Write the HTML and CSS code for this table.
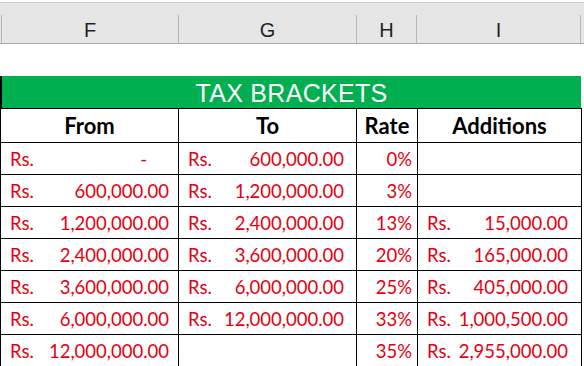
FILE: index.html
```html
<!DOCTYPE html>
<html>
<head>
<meta charset="utf-8">
<link rel="stylesheet" href="styles.css">
</head>
<body>
<div class="sheet">
  <div class="colhead">
    <div class="ch ch-f">F</div>
    <div class="ch ch-g">G</div>
    <div class="ch ch-h">H</div>
    <div class="ch ch-i">I</div>
    <div class="ch ch-rest"></div>
  </div>
  <div class="gap"></div>
  <div class="title">TAX BRACKETS</div>
  <table class="grid">
    <colgroup>
      <col class="w-from"><col class="w-to"><col class="w-rate"><col class="w-add">
    </colgroup>
    <tr class="hdr"><th>From</th><th>To</th><th>Rate</th><th>Additions</th></tr>
    <tr>
      <td class="f"><div class="money"><span>Rs.</span><span class="dash">-</span></div></td>
      <td class="g"><div class="money"><span>Rs.</span><span>600,000.00</span></div></td>
      <td class="h">0%</td>
      <td class="i"></td>
    </tr>
    <tr>
      <td class="f"><div class="money"><span>Rs.</span><span>600,000.00</span></div></td>
      <td class="g"><div class="money"><span>Rs.</span><span>1,200,000.00</span></div></td>
      <td class="h">3%</td>
      <td class="i"></td>
    </tr>
    <tr>
      <td class="f"><div class="money"><span>Rs.</span><span>1,200,000.00</span></div></td>
      <td class="g"><div class="money"><span>Rs.</span><span>2,400,000.00</span></div></td>
      <td class="h">13%</td>
      <td class="i"><div class="money"><span>Rs.</span><span>15,000.00</span></div></td>
    </tr>
    <tr>
      <td class="f"><div class="money"><span>Rs.</span><span>2,400,000.00</span></div></td>
      <td class="g"><div class="money"><span>Rs.</span><span>3,600,000.00</span></div></td>
      <td class="h">20%</td>
      <td class="i"><div class="money"><span>Rs.</span><span>165,000.00</span></div></td>
    </tr>
    <tr>
      <td class="f"><div class="money"><span>Rs.</span><span>3,600,000.00</span></div></td>
      <td class="g"><div class="money"><span>Rs.</span><span>6,000,000.00</span></div></td>
      <td class="h">25%</td>
      <td class="i"><div class="money"><span>Rs.</span><span>405,000.00</span></div></td>
    </tr>
    <tr>
      <td class="f"><div class="money"><span>Rs.</span><span>6,000,000.00</span></div></td>
      <td class="g"><div class="money"><span>Rs.</span><span>12,000,000.00</span></div></td>
      <td class="h">33%</td>
      <td class="i"><div class="money"><span>Rs.</span><span>1,000,500.00</span></div></td>
    </tr>
    <tr>
      <td class="f"><div class="money"><span>Rs.</span><span>12,000,000.00</span></div></td>
      <td class="g"></td>
      <td class="h">35%</td>
      <td class="i"><div class="money"><span>Rs.</span><span>2,955,000.00</span></div></td>
    </tr>
  </table>
</div>
</body>
</html>
```
FILE: styles.css
```css
html, body {
  margin: 0;
  padding: 0;
  background: #ffffff;
}
.sheet {
  width: 584px;
  height: 366px;
  overflow: hidden;
}
.colhead {
  margin-top: 2px;
  border-top: 1px solid #c8c8c8;
  border-bottom: 1px solid #a6a6a6;
  background: #e6e6e6;
  padding: 12px 0 0 1px;
  height: 28px;
  display: grid;
  grid-template-columns: 177px 178px 60px 164px 4px;
}
.ch {
  border-left: 1px solid #b8b8b8;
  font-family: "Liberation Sans", Arial, sans-serif;
  font-size: 20px;
  color: #1f1f1f;
  display: flex;
  align-items: center;
  justify-content: center;
  padding-top: 2px;
}
.gap {
  height: 32px;
}
.title {
  height: 32px;
  width: 579px;
  border-left: 2px solid #000;
  background: #00b050;
  color: #ffffff;
  font-family: "Liberation Sans", Arial, sans-serif;
  font-size: 25px;
  letter-spacing: 0.3px;
  line-height: 34px;
  text-align: center;
}
.grid {
  border-collapse: collapse;
  table-layout: fixed;
  width: 581px;
  margin-left: 0;
  font-family: Lato, "Open Sans", sans-serif;
}
.w-from { width: 178px; }
.w-to { width: 178px; }
.w-rate { width: 61px; }
.w-add { width: 164px; }
.grid th, .grid td {
  border: 1px solid #000;
  padding: 0;
}
.grid th {
  height: 33px;
  font-size: 22px;
  font-weight: 700;
  color: #000;
  text-align: center;
  vertical-align: middle;
}
.grid td {
  height: 31px;
  font-size: 18.5px;
  color: #e5000f;
  vertical-align: middle;
}
.money {
  display: flex;
  justify-content: space-between;
}
.grid td.f { padding: 0 9px 0 9px; }
.grid td.g { padding: 0 12px 0 9px; }
.grid td.h { padding: 0 5px 0 0; text-align: right; }
.grid td.i { padding: 0 13px 0 9px; }
.dash { margin-right: 22px; }
```
